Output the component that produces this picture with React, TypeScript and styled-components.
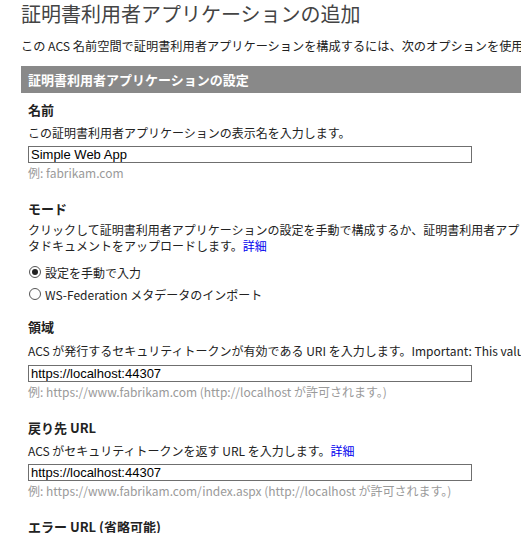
import styled, { createGlobalStyle } from 'styled-components';

const GlobalStyle = createGlobalStyle`
  html, body {
    margin: 0;
    padding: 0;
    background: #fff;
  }
  body {
    font-family: "Noto Sans CJK JP", "Noto Sans", sans-serif;
    color: #222;
    overflow: hidden;
  }
`;

const Page = styled.div`
  width: 521px;
  height: 533px;
  overflow: hidden;
  padding-left: 21px;
  box-sizing: border-box;
  white-space: nowrap;
`;

const Title = styled.h1`
  margin: 0;
  height: 30px;
  line-height: 28px;
  font-size: 20px;
  font-weight: normal;
  color: #444;
`;

const Intro = styled.p`
  margin: 7px 0 0;
  line-height: 18px;
  font-size: 12.2px;
`;

const SectionBar = styled.div`
  margin-top: 11px;
  width: 600px;
  height: 27px;
  line-height: 27px;
  padding-left: 7px;
  background: #898989;
  color: #fff;
  font-size: 13px;
  font-weight: bold;
`;

const Body = styled.div`
  padding: 7px 0 0 7px;
`;

const Field = styled.div<{ $gap?: number }>`
  margin-bottom: ${(p) => p.$gap ?? 16}px;
`;

const Label = styled.div`
  height: 20px;
  line-height: 20px;
  font-size: 13px;
  font-weight: bold;
  color: #222;
`;

const Desc = styled.div<{ $lines?: boolean; $room?: number }>`
  margin-top: ${(p) => 3 + (p.$room ?? 0)}px;
  line-height: ${(p) => (p.$lines ? 16 : 20)}px;
  font-size: 12px;
  color: #222;
`;

const Link = styled.a`
  color: #0000ee;
  text-decoration: none;
`;

const TextBox = styled.input<{ $room?: number }>`
  display: block;
  margin-top: ${(p) => 3 + (p.$room ?? 0)}px;
  width: 444px;
  height: 17px;
  box-sizing: border-box;
  border: 1px solid #6f6f6f;
  padding: 0 2px;
  font-family: "Liberation Sans", Arial, sans-serif;
  font-size: 13px;
  color: #000;
  outline: none;
  background: #fff;
`;

const Example = styled.div`
  line-height: 20px;
  font-size: 12px;
  color: #9a9a9a;
`;

const RadioList = styled.div`
  margin-top: 7px;
`;

const RadioRow = styled.label`
  display: flex;
  align-items: center;
  gap: 4px;
  height: 22px;
  font-size: 12px;
  color: #222;
`;

const RadioDot = styled.span<{ $on?: boolean }>`
  position: relative;
  width: 12px;
  height: 12px;
  margin-left: 1px;
  border-radius: 50%;
  border: 1px solid #555;
  box-sizing: border-box;
  background: #fff;
  &::after {
    content: '';
    display: ${(p) => (p.$on ? 'block' : 'none')};
    position: absolute;
    left: 2px;
    top: 2px;
    width: 6px;
    height: 6px;
    border-radius: 50%;
    background: #222;
  }
`;

function App() {
  return (
    <Page>
      <GlobalStyle />
      <Title>証明書利用者アプリケーションの追加</Title>
      <Intro>この ACS 名前空間で証明書利用者アプリケーションを構成するには、次のオプションを使用してください。</Intro>
      <SectionBar>証明書利用者アプリケーションの設定</SectionBar>
      <Body>
        <Field>
          <Label>名前</Label>
          <Desc>この証明書利用者アプリケーションの表示名を入力します。</Desc>
          <TextBox defaultValue="Simple Web App" />
          <Example>例: fabrikam.com</Example>
        </Field>
        <Field $gap={12}>
          <Label>モード</Label>
          <Desc $lines>
            クリックして証明書利用者アプリケーションの設定を手動で構成するか、証明書利用者アプリケーションのフェデレーション メタ
            <br />
            タドキュメントをアップロードします。<Link href="#">詳細</Link>
          </Desc>
          <RadioList>
            <RadioRow>
              <RadioDot $on />
              設定を手動で入力
            </RadioRow>
            <RadioRow>
              <RadioDot />
              WS-Federation メタデータのインポート
            </RadioRow>
          </RadioList>
        </Field>
        <Field>
          <Label>領域</Label>
          <Desc $room={1}>ACS が発行するセキュリティトークンが有効である URI を入力します。Important: This value is case sensitive.</Desc>
          <TextBox $room={1} defaultValue="https://localhost:44307" />
          <Example>例: https://www.fabrikam.com (http://localhost が許可されます。)</Example>
        </Field>
        <Field>
          <Label>戻り先 URL</Label>
          <Desc>
            ACS がセキュリティトークンを返す URL を入力します。<Link href="#">詳細</Link>
          </Desc>
          <TextBox defaultValue="https://localhost:44307" />
          <Example>例: https://www.fabrikam.com/index.aspx (http://localhost が許可されます。)</Example>
        </Field>
        <Field>
          <Label>エラー URL (省略可能)</Label>
        </Field>
      </Body>
    </Page>
  );
}

export default App;
